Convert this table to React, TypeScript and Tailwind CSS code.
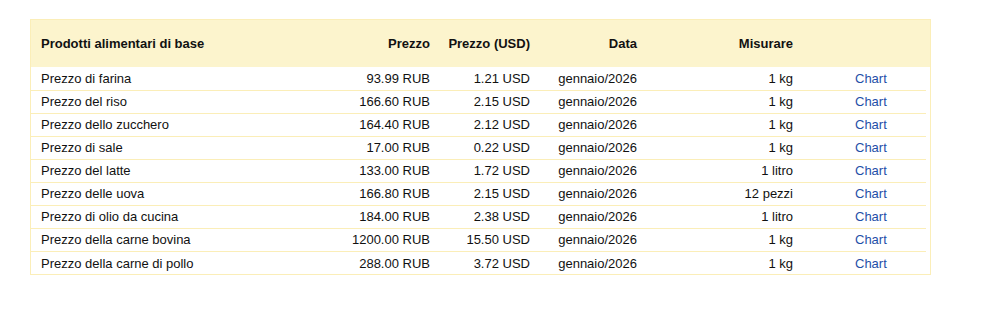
import React from 'react';

interface Row {
  name: string;
  price: string;
  usd: string;
  date: string;
  unit: string;
}

const rows: Row[] = [
  { name: 'Prezzo di farina', price: '93.99 RUB', usd: '1.21 USD', date: 'gennaio/2026', unit: '1 kg' },
  { name: 'Prezzo del riso', price: '166.60 RUB', usd: '2.15 USD', date: 'gennaio/2026', unit: '1 kg' },
  { name: 'Prezzo dello zucchero', price: '164.40 RUB', usd: '2.12 USD', date: 'gennaio/2026', unit: '1 kg' },
  { name: 'Prezzo di sale', price: '17.00 RUB', usd: '0.22 USD', date: 'gennaio/2026', unit: '1 kg' },
  { name: 'Prezzo del latte', price: '133.00 RUB', usd: '1.72 USD', date: 'gennaio/2026', unit: '1 litro' },
  { name: 'Prezzo delle uova', price: '166.80 RUB', usd: '2.15 USD', date: 'gennaio/2026', unit: '12 pezzi' },
  { name: 'Prezzo di olio da cucina', price: '184.00 RUB', usd: '2.38 USD', date: 'gennaio/2026', unit: '1 litro' },
  { name: 'Prezzo della carne bovina', price: '1200.00 RUB', usd: '15.50 USD', date: 'gennaio/2026', unit: '1 kg' },
  { name: 'Prezzo della carne di pollo', price: '288.00 RUB', usd: '3.72 USD', date: 'gennaio/2026', unit: '1 kg' },
];

export default function App() {
  return (
    <div className="min-h-screen bg-white pt-[19px] pl-[30px] font-['Liberation_Sans',Arial,sans-serif] text-[13px] text-[#111]">
      <div className="w-[901px] border border-[#fbeeb8] bg-white">
        <table className="w-[899px] table-fixed border-collapse">
          <colgroup>
            <col className="w-[309px]" />
            <col className="w-[100px]" />
            <col className="w-[100px]" />
            <col className="w-[107px]" />
            <col className="w-[156px]" />
            <col className="w-[123px]" />
            <col className="w-[4px]" />
          </colgroup>
          {/* Header */}
          <thead>
            <tr className="h-[47px] bg-[#fcf4cd] whitespace-nowrap">
              <th className="px-[10px] text-left font-bold">Prodotti alimentari di base</th>
              <th className="px-[10px] text-right font-bold">Prezzo</th>
              <th className="pr-[10px] pl-0 text-right font-bold">Prezzo (USD)</th>
              <th className="px-[10px] text-right font-bold">Data</th>
              <th className="px-[10px] text-right font-bold">Misurare</th>
              <th></th>
              <th></th>
            </tr>
          </thead>
          <tbody>
            {rows.map((row, i) => {
              const line = i < rows.length - 1 ? 'border-b border-[#fbeeb8]' : '';
              return (
                <tr key={row.name} className="h-[23px] whitespace-nowrap">
                  <td className={`px-[10px] pt-px text-left ${line}`}>{row.name}</td>
                  <td className={`px-[10px] pt-px text-right ${line}`}>{row.price}</td>
                  <td className={`px-[10px] pt-px text-right ${line}`}>{row.usd}</td>
                  <td className={`px-[10px] pt-px text-right ${line}`}>{row.date}</td>
                  <td className={`px-[10px] pt-px text-right ${line}`}>{row.unit}</td>
                  <td className={`pl-[52px] pt-px text-left ${line}`}>
                    <a href="#" className="text-[#1f4fa8]">Chart</a>
                  </td>
                  <td></td>
                </tr>
              );
            })}
          </tbody>
        </table>
      </div>
    </div>
  );
}
